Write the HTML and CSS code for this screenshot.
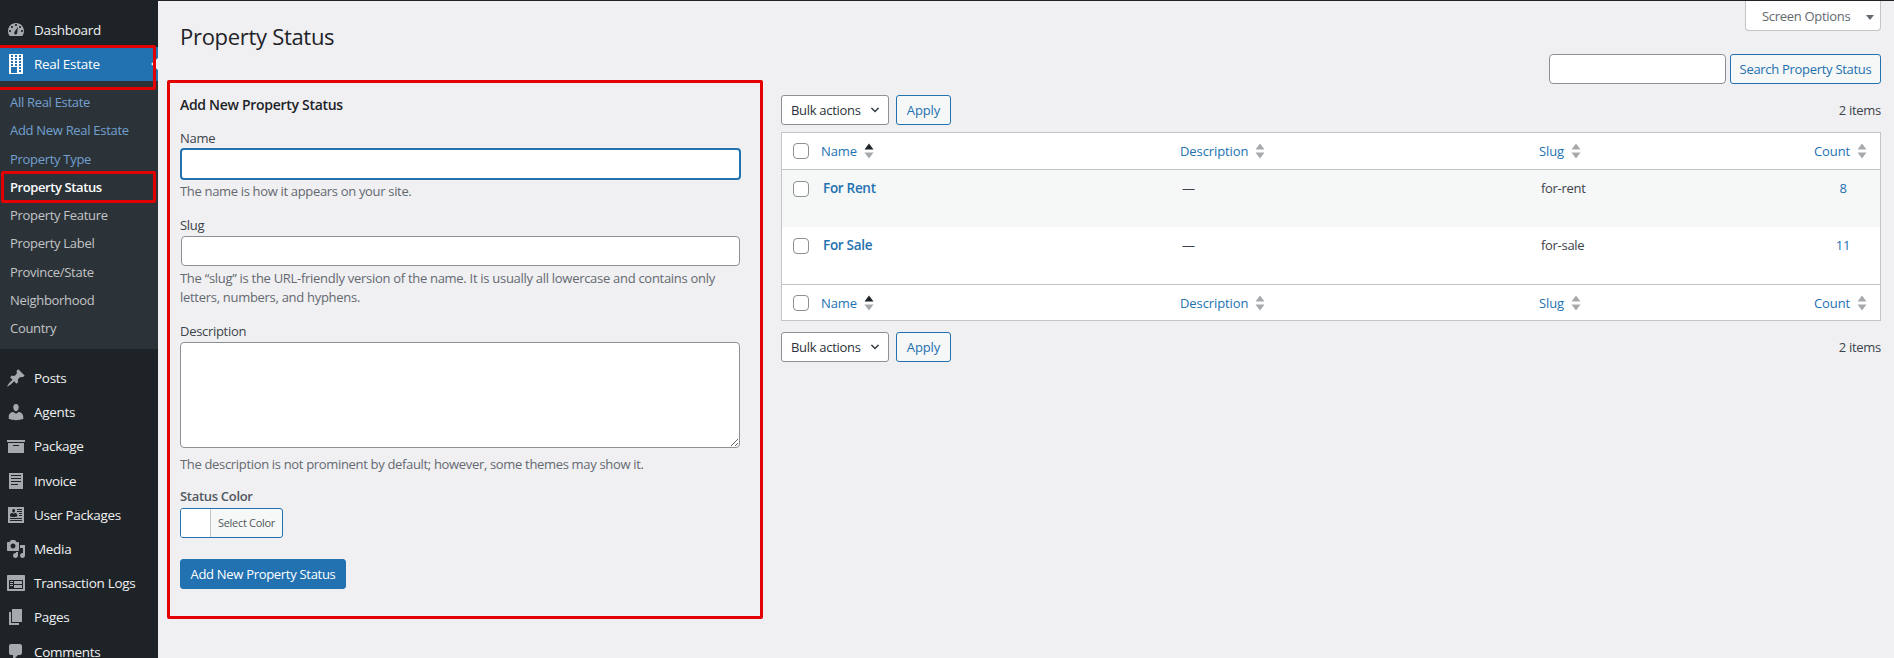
FILE: index.html
```html
<!DOCTYPE html>
<html lang="en">
<head>
<meta charset="utf-8">
<title>Property Status</title>
<link rel="stylesheet" href="styles.css">
</head>
<body>
<svg class="defs" width="0" height="0" aria-hidden="true">
  <symbol id="i-dashboard" viewBox="0 0 20 20"><path fill-rule="evenodd" d="M3.76 16h12.48c1.1-1.37 1.76-3.11 1.76-5 0-4.42-3.58-8-8-8s-8 3.58-8 8c0 1.89.66 3.63 1.76 5zM10 4c.55 0 1 .45 1 1s-.45 1-1 1-1-.45-1-1 .45-1 1-1zM6 6c.55 0 1 .45 1 1s-.45 1-1 1-1-.45-1-1 .45-1 1-1zm8 0c.55 0 1 .45 1 1s-.45 1-1 1-1-.45-1-1 .45-1 1-1zm-5.37 5.55L12 7l-.84 5.64c.1.39.04.8-.16 1.17-.41.72-1.33.97-2.05.55s-.96-1.33-.55-2.05c.17-.3.4-.6.63-.76zM4 10c.55 0 1 .45 1 1s-.45 1-1 1-1-.45-1-1 .45-1 1-1zm12 0c.55 0 1 .45 1 1s-.45 1-1 1-1-.45-1-1 .45-1 1-1z"/></symbol>
  <symbol id="i-building" viewBox="0 0 20 20"><path fill-rule="evenodd" d="M3 20h14V0H3v20zM7 3H5V1h2v2zm4 0H9V1h2v2zm4 0h-2V1h2v2zM7 6H5V4h2v2zm4 0H9V4h2v2zm4 0h-2V4h2v2zM7 9H5V7h2v2zm4 0H9V7h2v2zm4 0h-2V7h2v2zm-8 3H5v-2h2v2zm4 0H9v-2h2v2zm4 0h-2v-2h2v2zm-4 7H5v-6h6v6zm4-4h-2v-2h2v2zm0 3h-2v-2h2v2z"/></symbol>
  <symbol id="i-pin" viewBox="0 0 20 20"><path d="M10.44 3.02l1.82-1.82 6.36 6.35-1.83 1.82c-1.05-.68-2.48-.57-3.41.36l-.75.75c-.92.93-1.04 2.35-.35 3.41l-1.83 1.82-2.41-2.41-2.8 2.79c-.42.42-3.38 2.71-3.8 2.29s1.86-3.39 2.28-3.81l2.79-2.79L4.1 9.36l1.83-1.82c1.05.69 2.48.57 3.4-.36l.75-.75c.93-.92 1.05-2.35.36-3.41z"/></symbol>
  <symbol id="i-user" viewBox="0 0 20 20"><path d="M10 9.25c-2.27 0-2.73-3.44-2.73-3.44C7 4.02 7.82 2 9.97 2c2.16 0 2.98 2.02 2.71 3.81 0 0-.41 3.44-2.68 3.44zm0 2.57L12.72 10c2.39 0 4.52 2.33 4.52 4.53v2.49s-3.65 1.13-7.24 1.13c-3.65 0-7.24-1.13-7.24-1.13v-2.49c0-2.25 1.94-4.48 4.47-4.48z"/></symbol>
  <symbol id="i-archive" viewBox="0 0 20 20"><path fill-rule="evenodd" d="M19 4v2H1V4h18zM2 7h16v10H2V7zm11 3V9H7v1h6z"/></symbol>
  <symbol id="i-text" viewBox="0 0 20 20"><path fill-rule="evenodd" d="M3 2h14v16H3V2zm2 2v1h10V4H5zm0 3v1h10V7H5zm0 3v1h10v-1H5zm0 3v1h7v-1H5z"/></symbol>
  <symbol id="i-idalt" viewBox="0 0 20 20"><path fill-rule="evenodd" d="M18 18H2V2h16v16zM8.05 7.53c.13-.07.24-.15.33-.24.09-.1.17-.21.24-.34.07-.14.13-.26.17-.37s.07-.22.1-.34L8.95 6c0-.04.01-.07.01-.09.05-.32.03-.61-.04-.9-.08-.28-.23-.52-.46-.72C8.23 4.1 7.95 4 7.6 4c-.2 0-.39.04-.56.11-.17.08-.31.18-.41.3-.11.13-.2.27-.27.44-.07.16-.11.33-.12.51s0 .36.01.55l.02.09c.01.06.03.15.06.25s.06.21.1.33.1.25.17.37c.08.12.16.23.25.33s.2.19.34.25c.13.06.28.09.43.09s.3-.03.43-.09zM16 5V4h-5v1h5zm0 2V6h-5v1h5zM7.62 8.83l-1.38-.88c-.41 0-.79.11-1.14.32-.35.22-.62.5-.81.85-.19.34-.29.7-.29 1.07v1.25l.2.05c.13.04.31.09.55.14.24.06.51.12.8.17.29.06.62.1 1 .14.37.04.73.06 1.07.06s.69-.02 1.07-.06.7-.09.98-.14c.27-.05.54-.1.82-.17.27-.06.45-.11.54-.13.09-.03.16-.05.21-.06v-1.25c0-.36-.1-.72-.31-1.07s-.49-.64-.84-.86-.72-.33-1.11-.33zM16 9V8h-3v1h3zm0 2v-1h-3v1h3zm0 3v-1H4v1h12zm0 2v-1H4v1h12z"/></symbol>
  <symbol id="i-media" viewBox="0 0 20 20"><path fill-rule="evenodd" d="M13 11V4c0-.55-.45-1-1-1h-1.67L9 1H5L3.67 3H2c-.55 0-1 .45-1 1v7c0 .55.45 1 1 1h10c.55 0 1-.45 1-1zM7 4.5c1.38 0 2.5 1.12 2.5 2.5S8.38 9.5 7 9.5 4.5 8.38 4.5 7 5.62 4.5 7 4.5zM14 6h5v10.5c0 1.38-1.12 2.5-2.5 2.5S14 17.88 14 16.5s1.12-2.5 2.5-2.5c.17 0 .34.02.5.05V9h-3V6zm-4 8.05V13h2v3.5c0 1.38-1.12 2.5-2.5 2.5S7 17.88 7 16.5 8.12 14 9.5 14c.17 0 .34.02.5.05z"/></symbol>
  <symbol id="i-feedback" viewBox="0 0 20 20"><path fill-rule="evenodd" d="M2 2h16c.55 0 1 .45 1 1v14c0 .55-.45 1-1 1H2c-.55 0-1-.45-1-1V3c0-.55.45-1 1-1zm15 14V7H3v9h14zM4 8v1h3V8H4zm4 0v3h8V8H8zm-4 2v1h3v-1H4zm0 2v1h3v-1H4zm4 0v3h8v-3H8z"/></symbol>
  <symbol id="i-page" viewBox="0 0 20 20"><path d="M6 15V2h10v13H6zm-1 1h8v2H3V5h2v11z"/></symbol>
  <symbol id="i-comment" viewBox="0 0 20 20"><path d="M5 2h9c1.1 0 2 .9 2 2v7c0 1.1-.9 2-2 2h-2l-5 5v-5H5c-1.1 0-2-.9-2-2V4c0-1.1.9-2 2-2z"/></symbol>
  <symbol id="i-chev" viewBox="0 0 20 20"><path d="M5 6l5 5 5-5 2 1-7 7-7-7z"/></symbol>
  <symbol id="i-sort" viewBox="0 0 12 16"><path class="up" d="M6 .5l4.5 6h-9z"/><path class="down" d="M6 15.5l-4.5-6h9z"/></symbol>
</svg>
<div class="page">
  <nav class="sidebar">
    <ul class="menu menu-top">
      <li class="item"><svg class="ico"><use href="#i-dashboard"/></svg><span>Dashboard</span></li>
      <li class="item current marked"><svg class="ico"><use href="#i-building"/></svg><span>Real Estate</span></li>
    </ul>
    <ul class="submenu">
      <li class="sub blue">All Real Estate</li>
      <li class="sub blue">Add New Real Estate</li>
      <li class="sub blue">Property Type</li>
      <li class="sub active marked">Property Status</li>
      <li class="sub">Property Feature</li>
      <li class="sub">Property Label</li>
      <li class="sub">Province/State</li>
      <li class="sub">Neighborhood</li>
      <li class="sub">Country</li>
    </ul>
    <ul class="menu menu-rest">
      <li class="item"><svg class="ico"><use href="#i-pin"/></svg><span>Posts</span></li>
      <li class="item"><svg class="ico"><use href="#i-user"/></svg><span>Agents</span></li>
      <li class="item"><svg class="ico"><use href="#i-archive"/></svg><span>Package</span></li>
      <li class="item"><svg class="ico"><use href="#i-text"/></svg><span>Invoice</span></li>
      <li class="item"><svg class="ico"><use href="#i-idalt"/></svg><span>User Packages</span></li>
      <li class="item"><svg class="ico"><use href="#i-media"/></svg><span>Media</span></li>
      <li class="item"><svg class="ico"><use href="#i-feedback"/></svg><span>Transaction Logs</span></li>
      <li class="item"><svg class="ico"><use href="#i-page"/></svg><span>Pages</span></li>
      <li class="item"><svg class="ico"><use href="#i-comment"/></svg><span>Comments</span></li>
    </ul>
  </nav>
  <main class="main">
    <header class="head">
      <h1 class="title">Property Status</h1>
      <button class="screen-tab" type="button">Screen Options <span class="tri"></span></button>
    </header>
    <div class="cols">
      <form class="addform">
        <h2 class="form-title">Add New Property Status</h2>
        <div class="field f-name">
          <label class="lab">Name</label>
          <input class="inp focus" type="text">
          <p class="hint">The name is how it appears on your site.</p>
        </div>
        <div class="field f-slug">
          <label class="lab">Slug</label>
          <input class="inp" type="text">
          <p class="hint">The “slug” is the URL-friendly version of the name. It is usually all lowercase and contains only letters, numbers, and hyphens.</p>
        </div>
        <div class="field f-desc">
          <label class="lab">Description</label>
          <textarea class="area"></textarea>
          <p class="hint">The description is not prominent by default; however, some themes may show it.</p>
        </div>
        <div class="field f-color">
          <label class="lab strong">Status Color</label>
          <div class="colorbtn"><span class="swatch"></span><span class="colortxt">Select Color</span></div>
        </div>
        <button class="primary" type="button">Add New Property Status</button>
      </form>
      <section class="listing">
        <div class="search">
          <input class="search-inp" type="text">
          <button class="btn search-btn" type="button">Search Property Status</button>
        </div>
        <div class="nav nav-top">
          <div class="select">Bulk actions<svg class="chev"><use href="#i-chev"/></svg></div>
          <button class="btn" type="button">Apply</button>
          <span class="count-label">2 items</span>
        </div>
        <table class="tbl">
          <colgroup><col class="c-cb"><col class="c-name"><col class="c-desc"><col class="c-slug"><col class="c-count"></colgroup>
          <thead>
            <tr>
              <th class="cb"><input class="check" type="checkbox"></th>
              <th><span class="sort">Name <svg class="arrows sorted"><use href="#i-sort"/></svg></span></th>
              <th><span class="sort">Description <svg class="arrows"><use href="#i-sort"/></svg></span></th>
              <th><span class="sort">Slug <svg class="arrows"><use href="#i-sort"/></svg></span></th>
              <th><span class="sort">Count <svg class="arrows"><use href="#i-sort"/></svg></span></th>
            </tr>
          </thead>
          <tbody>
            <tr class="alt">
              <td class="cb"><input class="check" type="checkbox"></td>
              <td><a class="rowname">For Rent</a></td>
              <td>—</td>
              <td>for-rent</td>
              <td class="num">8</td>
            </tr>
            <tr>
              <td class="cb"><input class="check" type="checkbox"></td>
              <td><a class="rowname">For Sale</a></td>
              <td>—</td>
              <td>for-sale</td>
              <td class="num">11</td>
            </tr>
          </tbody>
          <tfoot>
            <tr>
              <th class="cb"><input class="check" type="checkbox"></th>
              <th><span class="sort">Name <svg class="arrows sorted"><use href="#i-sort"/></svg></span></th>
              <th><span class="sort">Description <svg class="arrows"><use href="#i-sort"/></svg></span></th>
              <th><span class="sort">Slug <svg class="arrows"><use href="#i-sort"/></svg></span></th>
              <th><span class="sort">Count <svg class="arrows"><use href="#i-sort"/></svg></span></th>
            </tr>
          </tfoot>
        </table>
        <div class="nav nav-bottom">
          <div class="select">Bulk actions<svg class="chev"><use href="#i-chev"/></svg></div>
          <button class="btn" type="button">Apply</button>
          <span class="count-label">2 items</span>
        </div>
      </section>
    </div>
  </main>
</div>
</body>
</html>
```
FILE: styles.css
```css
* { box-sizing: border-box; }
html, body { margin: 0; height: 658px; overflow: hidden; }
body { background: #f0f0f3; color: #3c434a; font: 13px/20px "Open Sans", "Noto Sans", sans-serif; letter-spacing: -0.3px; }
button, input, textarea { font: inherit; letter-spacing: inherit; margin: 0; }
ul { list-style: none; margin: 0; padding: 0; }
.defs { position: absolute; }
.page { display: flex; height: 658px; }

/* sidebar */
.sidebar { flex: 0 0 158px; background: #1d2327; color: #f0f0f1; padding-top: 13px; overflow: hidden; }
.item { display: flex; align-items: center; height: 34.2px; font-size: 13.5px; }
.item .ico { flex: 0 0 20px; width: 20px; height: 20px; margin: 0 8px 0 6px; fill: #a7aaad; }
.menu-top .item.current { height: 34px; background: #2271b1; color: #fff; position: relative; }
.current .ico { fill: #fff; }
.current::before { content: ""; position: absolute; right: 0; top: 11px; border: 6px solid transparent; border-right: 7px solid #f0f0f3; border-left: 0; }
.marked { position: relative; }
.marked::after { content: ""; position: absolute; border: 3px solid #e20000; border-radius: 2px; pointer-events: none; }
.item.marked::after { left: -4px; right: 2px; top: -2px; bottom: -9px; }
.submenu { background: #2c3338; padding: 7px 0; }
.sub { height: 28.25px; line-height: 28px; padding-left: 10px; color: #c3c4c7; }
.sub.blue { color: #72a0d0; }
.sub.active { color: #fff; font-weight: 600; letter-spacing: -0.4px; }
.sub.marked::after { left: 1px; right: 2px; top: -2px; bottom: -2px; }
.menu-rest { margin-top: 11.5px; }

/* main */
.main { flex: 1; min-width: 0; border-top: 1px solid #1d2327; padding: 0 13px 0 9px; }
.head { display: flex; justify-content: space-between; align-items: flex-start; height: 53px; }
.title { margin: 20px 0 0 13px; font-size: 22px; font-weight: 400; line-height: 30px; color: #1d2327; }
.screen-tab { height: 30px; width: 136px; background: #fff; border: 1px solid #c3c4c7; border-top: 0; border-radius: 0 0 4px 4px; color: #646970; padding: 0 0 0 8px; text-align: left; text-indent: 8px; }
.tri { display: inline-block; margin-left: 13px; border: 4px solid transparent; border-top: 5px solid #646970; border-bottom: 0; vertical-align: 1px; text-indent: 0; }
.cols { display: grid; grid-template-columns: 596px 1100px; column-gap: 18px; }

/* form */
.addform { margin-top: 26px; height: 539px; border: 3px solid #e20000; border-radius: 2px; padding: 12px 0 0 10px; }
.form-title { margin: 0; font-size: 14px; line-height: 20px; font-weight: 600; color: #1d2327; }
.field { display: flex; flex-direction: column; align-items: flex-start; }
.lab { display: block; line-height: 20px; color: #3c434a; }
.lab.strong { font-weight: 600; color: #50575e; }
.inp { display: block; width: 559px; margin-left: 1px; height: 29.5px; background: #fff; border: 1px solid #8c8f94; border-radius: 4px; padding: 0 8px; outline: 0; }
.inp.focus { width: 561px; margin-left: 0; height: 32px; border: 2px solid #2271b1; }
.area { display: block; width: 560px; height: 106px; background: #fff; border: 1px solid #8c8f94; border-radius: 4px; outline: 0; }
.hint { margin: 0; color: #646970; letter-spacing: -0.33px; }
.f-name { margin-top: 13px; }
.f-name .hint { margin-top: 1px; }
.f-slug { margin-top: 14px; }
.f-slug .lab { margin-bottom: 1px; }
.f-slug .hint { margin-top: 3px; width: 560px; line-height: 19px; letter-spacing: -0.29px; }
.f-desc { margin-top: 14px; }
.f-desc .lab { margin-bottom: 1px; }
.f-desc .hint { margin-top: 6px; }
.f-color { margin-top: 12px; }
.f-color .lab { margin-bottom: 2px; }
.colorbtn { display: flex; width: 103px; height: 30px; border: 1px solid #2271b1; border-radius: 3px; background: #f6f7f7; overflow: hidden; }
.swatch { width: 30px; background: #fff; border-right: 1px solid #c3c4c7; }
.colortxt { flex: 1; text-align: center; font-size: 11px; line-height: 28px; color: #50575e; }
.primary { display: block; margin-top: 21px; width: 166px; height: 30px; padding: 0; background: #2271b1; color: #fff; border: 1px solid #2271b1; border-radius: 3px; }

/* listing */
.search { display: flex; justify-content: flex-end; gap: 4px; height: 30px; }
.search-inp { width: 177px; height: 30px; background: #fff; border: 1px solid #8c8f94; border-radius: 4px; outline: 0; }
.btn { height: 30px; padding: 0 10px; background: #f6f7f7; color: #2271b1; border: 1px solid #2271b1; border-radius: 3px; }
.search-btn { width: 151px; padding: 0; }
.nav { display: flex; align-items: center; gap: 7px; height: 30px; }
.nav-top { margin-top: 11px; margin-bottom: 7px; }
.nav-bottom { margin-top: 11px; }
.nav .btn { width: 55px; padding: 0; letter-spacing: -0.1px; }
.select { display: flex; align-items: center; justify-content: space-between; width: 108px; height: 30px; padding: 0 7px 0 9px; background: #fff; border: 1px solid #8c8f94; border-radius: 3px; color: #2c3338; }
.chev { width: 12px; height: 12px; fill: #2c3338; }
.count-label { margin-left: auto; }
.tbl { width: 1100px; table-layout: fixed; border-collapse: separate; border-spacing: 0; background: #fff; border: 1px solid #c3c4c7; }
.c-cb { width: 31px; }
.c-name { width: 359px; }
.c-desc { width: 359px; }
.c-slug { width: 275px; }
.c-count { width: 74px; }
.tbl th { height: 36px; padding: 0 8px; text-align: left; font-weight: 400; letter-spacing: -0.1px; }
.tbl thead th { height: 37px; border-bottom: 1px solid #c3c4c7; }
.tbl tfoot th { border-top: 1px solid #c3c4c7; }
.tbl td { height: 57px; padding: 8px 10px; vertical-align: top; }
.tbl .cb { padding: 0 0 0 11px; }
.tbl td.cb { padding-top: 11px; }
.alt td { background: #f6f7f7; }
.check { appearance: none; display: block; width: 16px; height: 16px; background: #fff; border: 1px solid #8c8f94; border-radius: 4px; }
.sort { display: inline-flex; align-items: center; gap: 6px; color: #2271b1; }
.arrows { width: 12px; height: 16px; fill: #a7aaad; }
.up { fill: var(--up, #a7aaad); }
.arrows.sorted { --up: #1d2327; }
.rowname { color: #2271b1; font-weight: 600; font-size: 13.5px; }
.num { text-align: center; color: #2271b1; padding: 8px 0 !important; }
```
